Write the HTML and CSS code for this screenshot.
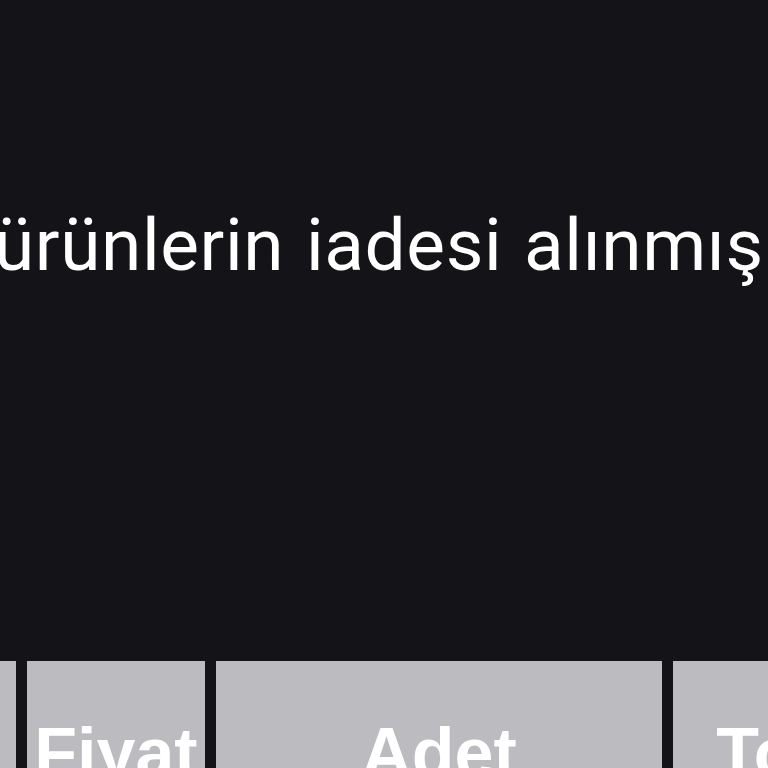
FILE: index.html
```html
<!DOCTYPE html>
<html lang="tr">
<head>
<meta charset="utf-8">
<link rel="stylesheet" href="styles.css">
</head>
<body>
<div class="screen">
  <p class="message">ürünlerin iadesi alınmış</p>
  <div class="table-head">
    <div class="cell cell-a"></div>
    <div class="cell cell-price">Fiyat</div>
    <div class="cell cell-qty">Adet</div>
    <div class="cell cell-total">Toplam</div>
  </div>
</div>
</body>
</html>
```
FILE: styles.css
```css
html, body {
  margin: 0;
  padding: 0;
  background: #131318;
}
.screen {
  width: 768px;
  height: 768px;
  overflow: hidden;
  background: #131318;
  display: flex;
  flex-direction: column;
}
.message {
  margin: 209px 0 0 -6px;
  font-family: Roboto, "Noto Sans", sans-serif;
  font-size: 73px;
  line-height: 72px;
  letter-spacing: 0.6px;
  word-spacing: 3px;
  color: #ffffff;
  white-space: nowrap;
}
.table-head {
  margin-top: auto;
  margin-left: -84px;
  height: 107px;
  display: flex;
  gap: 11px;
}
.cell {
  flex: none;
  background: #bcbbc0;
  box-sizing: border-box;
  padding-top: 57px;
  font-family: "Liberation Sans", Arial, sans-serif;
  font-weight: bold;
  font-size: 70px;
  line-height: 70px;
  color: #ffffff;
  text-align: center;
  white-space: nowrap;
  overflow: hidden;
}
.cell-a { width: 100px; }
.cell-price { width: 178px; }
.cell-qty { width: 446px; }
.cell-total { width: 330px; }
```
